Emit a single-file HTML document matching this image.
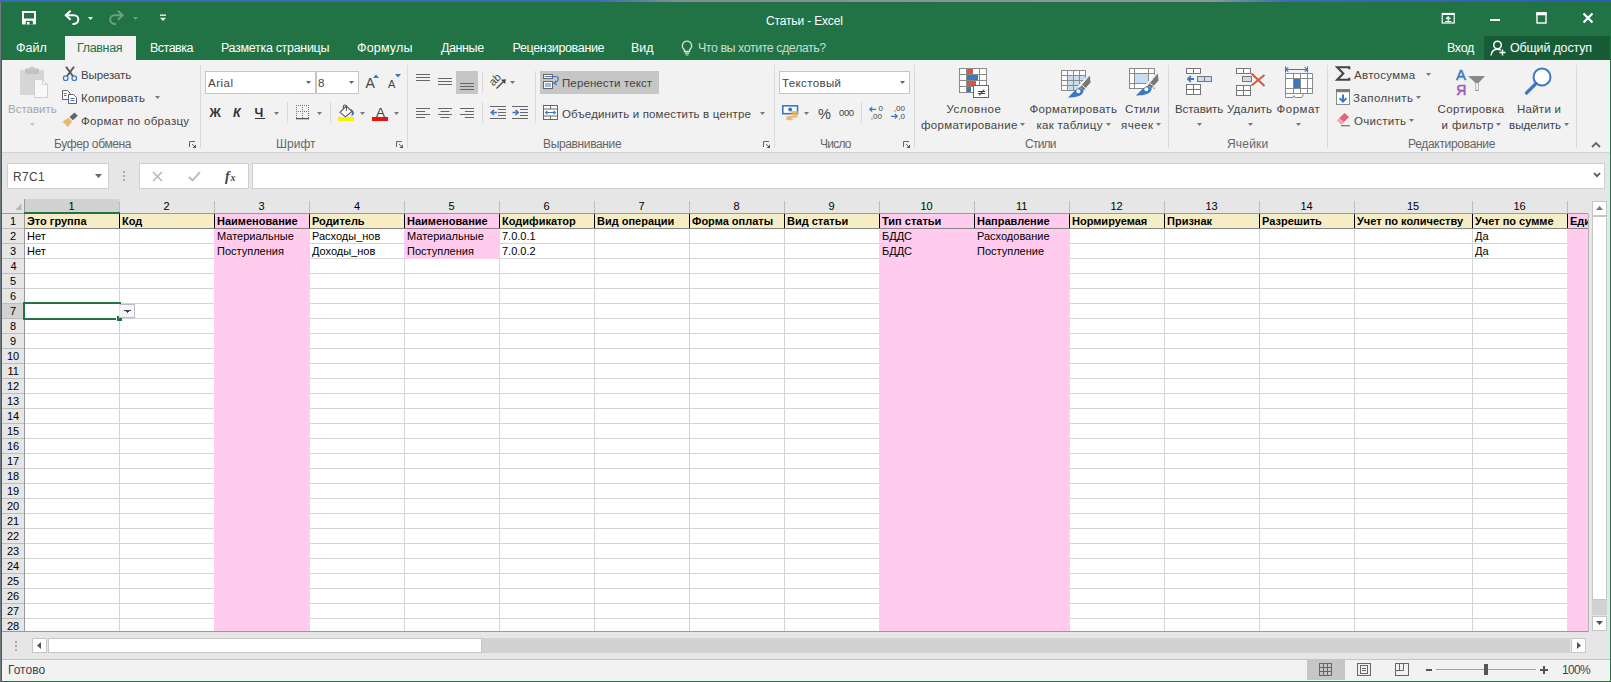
<!DOCTYPE html><html lang="ru"><head><meta charset="utf-8"><title>Статьи - Excel</title><style>html,body{margin:0;padding:0;}body{width:1611px;height:682px;overflow:hidden;position:relative;background:#217346;font-family:"Liberation Sans", "DejaVu Sans", sans-serif;}body>div,body>svg,body>span{position:absolute;}svg{display:block;overflow:visible;}.t{position:absolute;white-space:nowrap;}</style></head><body>
<div style="left:0px;top:0px;width:1611px;height:682px;background:#217346;"></div>
<div style="left:0px;top:0px;width:1611px;height:2px;background:linear-gradient(90deg,#3b6bb3 0,#3b6bb3 37%,#7d8f96 42%,#8a9a98 75%,#3b6bb3 80%,#2f5ea8 100%);"></div>
<div style="left:0px;top:2px;width:1px;height:680px;background:#6f7a80;"></div>
<div style="left:1px;top:2px;width:1609px;height:58px;background:#217346;"></div>
<div style="left:2px;top:60px;width:1608px;height:93px;background:#f2f2f2;"></div>
<div style="left:2px;top:153px;width:1608px;height:46px;background:#e6e6e6;"></div>
<div style="left:2px;top:152px;width:1608px;height:1px;background:#d4d4d4;"></div>
<div style="left:65px;top:36px;width:71px;height:24px;background:#f2f2f2;"></div>
<div style="left:1484px;top:36px;width:126px;height:24px;background:#185c37;"></div>
<svg style="left:22px;top:11px;" width="14" height="14" viewBox="0 0 14 14"><rect x="0" y="0" width="14" height="13.400" fill="#fff"/><rect x="2" y="2" width="10" height="5.500" fill="#217346"/><rect x="3.800" y="9.800" width="7" height="3.600" fill="#217346"/><rect x="5" y="11" width="2.500" height="2.400" fill="#fff"/></svg>
<svg style="left:64px;top:10px;" width="17" height="15" viewBox="0 0 17 15"><path d="M1.800,5.300 H10 A4.300,4.300 0 0 1 10,13.900 H8.500" fill="none" stroke="#fff" stroke-width="2"/><path d="M6.600,0.800 L1.800,5.300 L6.600,9.800" fill="none" stroke="#fff" stroke-width="2"/></svg>
<svg style="left:88px;top:17px;" width="5" height="3" viewBox="0 0 5 3"><polygon points="0,0 5,0 2.5,3" fill="#fff"/></svg>
<svg style="left:108px;top:10px;" width="17" height="15" viewBox="0 0 17 15"><g opacity="0.33"><path d="M14.700,5.300 H6.500 A4.300,4.300 0 0 0 6.500,13.900 H8" fill="none" stroke="#fff" stroke-width="2"/><path d="M9.900,0.800 L14.700,5.300 L9.900,9.800" fill="none" stroke="#fff" stroke-width="2"/></g></svg>
<svg style="left:133px;top:17px;" width="5" height="3" viewBox="0 0 5 3"><polygon points="0,0 5,0 2.5,3" fill="rgba(255,255,255,0.33)"/></svg>
<svg style="left:160px;top:14px;" width="6" height="8" viewBox="0 0 6 8"><rect x="0" y="0.5" width="6" height="1.300" fill="#fff"/><polygon points="0,3.800 6,3.800 3,7" fill="#fff"/></svg>
<svg style="left:1441px;top:12px;" width="14" height="12" viewBox="0 0 14 12"><rect x="1.200" y="1.500" width="12" height="9.500" fill="none" stroke="#fff" stroke-width="1.200"/><rect x="1" y="1" width="12.400" height="2" fill="#fff"/><path d="M7.200,9.500 V5 M5,7 L7.200,4.800 L9.400,7" fill="none" stroke="#fff" stroke-width="1.200"/><rect x="4.200" y="9" width="6" height="1" fill="#fff"/></svg>
<div style="left:1490px;top:19px;width:10px;height:2px;background:#fff;"></div>
<svg style="left:1536px;top:12px;" width="11" height="12" viewBox="0 0 11 12"><rect x="1" y="1" width="9" height="10" fill="none" stroke="#fff" stroke-width="1.4"/><rect x="0.3" y="0.3" width="10.4" height="3" fill="#fff"/></svg>
<svg style="left:1582px;top:12px;" width="12" height="12" viewBox="0 0 12 12"><path d="M1.5,1.5 L10.5,10.5 M10.5,1.5 L1.5,10.5" stroke="#fff" stroke-width="2.2"/></svg>
<svg style="left:680px;top:40px;" width="14" height="17" viewBox="0 0 14 17"><path d="M7,1.2 A4.6,4.6 0 0 1 9.6,9.6 V11.5 H4.4 V9.6 A4.6,4.6 0 0 1 7,1.2 Z" fill="none" stroke="#d4e4da" stroke-width="1.3"/><path d="M4.8,13.2 H9.2 M5.6,15 H8.4" stroke="#d4e4da" stroke-width="1.2"/></svg>
<svg style="left:1490px;top:40px;" width="17" height="17" viewBox="0 0 17 17"><circle cx="7.5" cy="5" r="3.8" fill="none" stroke="#fff" stroke-width="1.5"/><path d="M1,15.5 C1.5,11 4,9.2 7.5,9.2 C9,9.2 10,9.6 10.8,10.2" fill="none" stroke="#fff" stroke-width="1.5"/><path d="M12.5,9.5 V15.5 M9.5,12.5 H15.5" stroke="#fff" stroke-width="1.5"/></svg>
<div style="left:200px;top:65px;width:1px;height:83px;background:#dadada;"></div>
<div style="left:407px;top:65px;width:1px;height:83px;background:#dadada;"></div>
<div style="left:774px;top:65px;width:1px;height:83px;background:#dadada;"></div>
<div style="left:914px;top:65px;width:1px;height:83px;background:#dadada;"></div>
<div style="left:1168px;top:65px;width:1px;height:83px;background:#dadada;"></div>
<div style="left:1327px;top:65px;width:1px;height:83px;background:#dadada;"></div>
<div style="left:1576px;top:65px;width:1px;height:83px;background:#dadada;"></div>
<div style="left:287px;top:102px;width:1px;height:21px;background:#dadada;"></div>
<div style="left:330px;top:102px;width:1px;height:21px;background:#dadada;"></div>
<div style="left:482px;top:71px;width:1px;height:22px;background:#dadada;"></div>
<div style="left:482px;top:102px;width:1px;height:21px;background:#dadada;"></div>
<div style="left:535px;top:71px;width:1px;height:52px;background:#dadada;"></div>
<div style="left:861px;top:102px;width:1px;height:21px;background:#dadada;"></div>
<svg style="left:189px;top:141px;" width="8" height="8" viewBox="0 0 8 8"><path d="M0.5,6 V0.5 H6" fill="none" stroke="#666" stroke-width="1"/><path d="M3,3 L6,6" stroke="#666" stroke-width="1"/><polygon points="7,3.500 7,7 3.500,7" fill="#555"/></svg>
<svg style="left:396px;top:141px;" width="8" height="8" viewBox="0 0 8 8"><path d="M0.5,6 V0.5 H6" fill="none" stroke="#666" stroke-width="1"/><path d="M3,3 L6,6" stroke="#666" stroke-width="1"/><polygon points="7,3.500 7,7 3.500,7" fill="#555"/></svg>
<svg style="left:763px;top:141px;" width="8" height="8" viewBox="0 0 8 8"><path d="M0.5,6 V0.5 H6" fill="none" stroke="#666" stroke-width="1"/><path d="M3,3 L6,6" stroke="#666" stroke-width="1"/><polygon points="7,3.500 7,7 3.500,7" fill="#555"/></svg>
<svg style="left:903px;top:141px;" width="8" height="8" viewBox="0 0 8 8"><path d="M0.5,6 V0.5 H6" fill="none" stroke="#666" stroke-width="1"/><path d="M3,3 L6,6" stroke="#666" stroke-width="1"/><polygon points="7,3.500 7,7 3.500,7" fill="#555"/></svg>
<svg style="left:1591px;top:141px;" width="10" height="7" viewBox="0 0 10 7"><path d="M1,6 L5,2 L9,6" fill="none" stroke="#666" stroke-width="1.8"/></svg>
<svg style="left:20px;top:67px;" width="29" height="32" viewBox="0 0 29 32"><rect x="0" y="3" width="24" height="25" fill="#d6d6d6"/><rect x="5" y="1.500" width="14" height="5.500" rx="1" fill="#c2c2c2"/><circle cx="12" cy="2.500" r="2" fill="none" stroke="#c2c2c2" stroke-width="1.3"/><path d="M14.500,12.500 H22.500 L27.500,17.500 V30.500 H14.500 Z" fill="#f8f8f8" stroke="#cfcfcf" stroke-width="1"/><path d="M22.500,12.500 V17.500 H27.500" fill="none" stroke="#cfcfcf" stroke-width="1"/></svg>
<svg style="left:30px;top:123px;" width="5" height="3" viewBox="0 0 5 3"><polygon points="0,0 5,0 2.5,3" fill="#c0c0c0"/></svg>
<svg style="left:62px;top:66px;" width="16" height="16" viewBox="0 0 16 16"><path d="M4,0.8 L10.800,10 M12,0.8 L5.200,10" stroke="#555" stroke-width="1.900" fill="none"/><circle cx="3.700" cy="12.200" r="2.300" fill="none" stroke="#3b78c4" stroke-width="1.200"/><circle cx="12.300" cy="12.200" r="2.300" fill="none" stroke="#3b78c4" stroke-width="1.200"/></svg>
<svg style="left:61px;top:89px;" width="17" height="16" viewBox="0 0 17 16"><path d="M1.5,1.5 H6.5 L9,4 V10.5 H1.5 Z" fill="#fff" stroke="#666" stroke-width="1"/><path d="M7.5,5.5 H12.5 L15.5,8.5 V14.5 H7.5 Z" fill="#fff" stroke="#666" stroke-width="1"/><path d="M9.5,9.5 H13.5 M9.5,11.5 H13.5" stroke="#3b78c4" stroke-width="1"/><path d="M3,4.5 H5.5 M3,6.5 H5.5" stroke="#3b78c4" stroke-width="1"/></svg>
<svg style="left:155px;top:96px;" width="5" height="3" viewBox="0 0 5 3"><polygon points="0,0 5,0 2.5,3" fill="#777"/></svg>
<svg style="left:62px;top:112px;" width="17" height="16" viewBox="0 0 17 16"><path d="M7.500,5 L12.500,0.5 L15.800,3.800 L10.800,8.300 Z" fill="#666"/><path d="M0.5,9.500 L6.800,5.800 L10.200,9.200 L6,15 Z" fill="#e6b870"/><path d="M7,5.300 L10.700,9" stroke="#f2f2f2" stroke-width="0.900"/></svg>
<div style="left:205px;top:71px;width:111px;height:23px;background:#fff;border:1px solid #c6c6c6;box-sizing:border-box;"></div>
<div style="left:316px;top:71px;width:43px;height:23px;background:#fff;border:1px solid #c6c6c6;box-sizing:border-box;"></div>
<svg style="left:306px;top:81px;" width="5" height="3" viewBox="0 0 5 3"><polygon points="0,0 5,0 2.5,3" fill="#666"/></svg>
<svg style="left:349px;top:81px;" width="5" height="3" viewBox="0 0 5 3"><polygon points="0,0 5,0 2.5,3" fill="#666"/></svg>
<svg style="left:373px;top:74px;" width="6" height="4" viewBox="0 0 6 4"><polygon points="0,4 6,4 3,0.5" fill="#3b78c4"/></svg>
<svg style="left:395px;top:74px;" width="6" height="4" viewBox="0 0 6 4"><polygon points="0,0 6,0 3,3.5" fill="#3b78c4"/></svg>
<div style="left:255px;top:118px;width:10px;height:1px;background:#333;"></div>
<svg style="left:274px;top:112px;" width="5" height="3" viewBox="0 0 5 3"><polygon points="0,0 5,0 2.5,3" fill="#777"/></svg>
<svg style="left:296px;top:105px;" width="14" height="15" viewBox="0 0 14 15"><rect x="0" y="0" width="1" height="1" fill="#777"/><rect x="0" y="6" width="1" height="1" fill="#777"/><rect x="0" y="0" width="1" height="1" fill="#777"/><rect x="6" y="0" width="1" height="1" fill="#777"/><rect x="12" y="0" width="1" height="1" fill="#777"/><rect x="2" y="0" width="1" height="1" fill="#777"/><rect x="2" y="6" width="1" height="1" fill="#777"/><rect x="0" y="2" width="1" height="1" fill="#777"/><rect x="6" y="2" width="1" height="1" fill="#777"/><rect x="12" y="2" width="1" height="1" fill="#777"/><rect x="4" y="0" width="1" height="1" fill="#777"/><rect x="4" y="6" width="1" height="1" fill="#777"/><rect x="0" y="4" width="1" height="1" fill="#777"/><rect x="6" y="4" width="1" height="1" fill="#777"/><rect x="12" y="4" width="1" height="1" fill="#777"/><rect x="6" y="0" width="1" height="1" fill="#777"/><rect x="6" y="6" width="1" height="1" fill="#777"/><rect x="0" y="6" width="1" height="1" fill="#777"/><rect x="6" y="6" width="1" height="1" fill="#777"/><rect x="12" y="6" width="1" height="1" fill="#777"/><rect x="8" y="0" width="1" height="1" fill="#777"/><rect x="8" y="6" width="1" height="1" fill="#777"/><rect x="0" y="8" width="1" height="1" fill="#777"/><rect x="6" y="8" width="1" height="1" fill="#777"/><rect x="12" y="8" width="1" height="1" fill="#777"/><rect x="10" y="0" width="1" height="1" fill="#777"/><rect x="10" y="6" width="1" height="1" fill="#777"/><rect x="0" y="10" width="1" height="1" fill="#777"/><rect x="6" y="10" width="1" height="1" fill="#777"/><rect x="12" y="10" width="1" height="1" fill="#777"/><rect x="12" y="0" width="1" height="1" fill="#777"/><rect x="12" y="6" width="1" height="1" fill="#777"/><rect x="0" y="12" width="1" height="1" fill="#777"/><rect x="6" y="12" width="1" height="1" fill="#777"/><rect x="12" y="12" width="1" height="1" fill="#777"/><rect x="0" y="13" width="13" height="1.300" fill="#555"/></svg>
<svg style="left:317px;top:112px;" width="5" height="3" viewBox="0 0 5 3"><polygon points="0,0 5,0 2.5,3" fill="#777"/></svg>
<svg style="left:338px;top:104px;" width="17" height="17" viewBox="0 0 17 17"><rect x="0" y="13" width="16" height="4" fill="#f5f500"/><path d="M12,4.800 C15.200,6 16.600,8.500 15.900,10.300 C15.200,11.200 14.200,11.800 13.200,12.300 C13.800,10.200 14.100,8.600 14,7.600 Z" fill="#3b78c4"/><path d="M2,8.300 L8.300,2 L14,7.500 L7.400,12.900 Z" fill="#fff" stroke="#555" stroke-width="1.100"/><path d="M5.400,4.600 V2.500 A1.550,1.550 0 0 1 8.500,2.500 V6.800" fill="none" stroke="#555" stroke-width="1.100"/></svg>
<svg style="left:360px;top:112px;" width="5" height="3" viewBox="0 0 5 3"><polygon points="0,0 5,0 2.5,3" fill="#777"/></svg>
<div style="left:372px;top:117px;width:16px;height:4px;background:#f00f0f;"></div>
<svg style="left:394px;top:112px;" width="5" height="3" viewBox="0 0 5 3"><polygon points="0,0 5,0 2.5,3" fill="#777"/></svg>
<svg style="left:416px;top:74px;" width="14" height="8" viewBox="0 0 14 8"><rect x="0" y="0" width="14" height="1" fill="#666"/><rect x="0" y="3" width="14" height="1" fill="#666"/><rect x="0" y="6" width="14" height="1" fill="#666"/></svg>
<svg style="left:438px;top:78px;" width="14" height="8" viewBox="0 0 14 8"><rect x="0" y="0" width="14" height="1" fill="#666"/><rect x="0" y="3" width="14" height="1" fill="#666"/><rect x="0" y="6" width="14" height="1" fill="#666"/></svg>
<div style="left:456px;top:71px;width:22px;height:23px;background:#c6c6c6;"></div>
<svg style="left:460px;top:83px;" width="14" height="8" viewBox="0 0 14 8"><rect x="0" y="0" width="14" height="1" fill="#666"/><rect x="0" y="3" width="14" height="1" fill="#666"/><rect x="0" y="6" width="14" height="1" fill="#666"/></svg>
<svg style="left:416px;top:108px;" width="14" height="10" viewBox="0 0 14 10"><rect x="0" y="0" width="14" height="1" fill="#666"/><rect x="0" y="3" width="9" height="1" fill="#666"/><rect x="0" y="6" width="14" height="1" fill="#666"/><rect x="0" y="9" width="9" height="1" fill="#666"/></svg>
<svg style="left:438px;top:108px;" width="14" height="10" viewBox="0 0 14 10"><rect x="0.0" y="0" width="14" height="1" fill="#666"/><rect x="2.5" y="3" width="9" height="1" fill="#666"/><rect x="0.0" y="6" width="14" height="1" fill="#666"/><rect x="2.5" y="9" width="9" height="1" fill="#666"/></svg>
<svg style="left:460px;top:108px;" width="14" height="10" viewBox="0 0 14 10"><rect x="0" y="0" width="14" height="1" fill="#666"/><rect x="5" y="3" width="9" height="1" fill="#666"/><rect x="0" y="6" width="14" height="1" fill="#666"/><rect x="5" y="9" width="9" height="1" fill="#666"/></svg>
<svg style="left:489px;top:73px;" width="18" height="17" viewBox="0 0 18 17"><text transform="translate(4.200,13.500) rotate(-45)" font-family="Liberation Sans" font-size="11" fill="#444">ab</text><path d="M7.500,15.500 L15.500,7.500" stroke="#444" stroke-width="1.2"/><polygon points="12,6.800 16.800,6.200 16.200,11" fill="#444"/></svg>
<svg style="left:510px;top:81px;" width="5" height="3" viewBox="0 0 5 3"><polygon points="0,0 5,0 2.5,3" fill="#777"/></svg>
<svg style="left:490px;top:106px;" width="16" height="13" viewBox="0 0 16 13"><rect x="0" y="0" width="16" height="1" fill="#666"/><rect x="8" y="3" width="8" height="1" fill="#666"/><rect x="8" y="6" width="8" height="1" fill="#666"/><rect x="8" y="9" width="8" height="1" fill="#666"/><rect x="0" y="12" width="16" height="1" fill="#666"/><path d="M7,6.5 H1.5 M4,4 L1.3,6.5 L4,9" fill="none" stroke="#3b78c4" stroke-width="1.6"/></svg>
<svg style="left:512px;top:106px;" width="16" height="13" viewBox="0 0 16 13"><rect x="0" y="0" width="16" height="1" fill="#666"/><rect x="8" y="3" width="8" height="1" fill="#666"/><rect x="8" y="6" width="8" height="1" fill="#666"/><rect x="8" y="9" width="8" height="1" fill="#666"/><rect x="0" y="12" width="16" height="1" fill="#666"/><path d="M0.5,6.5 H6 M3.5,4 L6.2,6.5 L3.5,9" fill="none" stroke="#3b78c4" stroke-width="1.6"/></svg>
<div style="left:540px;top:71px;width:119px;height:23px;background:#c6c6c6;"></div>
<svg style="left:543px;top:74px;" width="16" height="15" viewBox="0 0 16 15"><rect x="0.5" y="0.5" width="9" height="4" fill="#fff" stroke="#666"/><rect x="0.5" y="7.500" width="9" height="7" fill="#fff" stroke="#666"/><path d="M2,2.500 H13.500 M2,10 H8 M2,12 H8" stroke="#3b78c4" stroke-width="1"/><path d="M13.500,2.500 C16.500,3.500 15.500,8 11.300,9 M13.300,6.800 L10.800,9.100 L13.800,10.800" fill="none" stroke="#3b78c4" stroke-width="1.100"/></svg>
<svg style="left:543px;top:105px;" width="16" height="15" viewBox="0 0 16 15"><rect x="0.5" y="0.5" width="14" height="14" fill="#fff" stroke="#666"/><path d="M0.5,4 H14.5 M0.5,11 H14.5 M7.5,0.5 V4 M7.5,11 V14.5" stroke="#666" stroke-width="1"/><path d="M2.5,7.5 H12.5 M4.5,5.8 L2.5,7.5 L4.5,9.2 M10.5,5.8 L12.5,7.5 L10.5,9.2" fill="none" stroke="#3b78c4" stroke-width="1.1"/></svg>
<svg style="left:760px;top:112px;" width="5" height="3" viewBox="0 0 5 3"><polygon points="0,0 5,0 2.5,3" fill="#777"/></svg>
<div style="left:779px;top:71px;width:131px;height:23px;background:#fff;border:1px solid #c6c6c6;box-sizing:border-box;"></div>
<svg style="left:900px;top:81px;" width="5" height="3" viewBox="0 0 5 3"><polygon points="0,0 5,0 2.5,3" fill="#666"/></svg>
<svg style="left:782px;top:105px;" width="17" height="16" viewBox="0 0 17 16"><rect x="0.8" y="0.8" width="14.700" height="7.900" fill="#fff" stroke="#3b78c4" stroke-width="1.600"/><circle cx="8.200" cy="4.500" r="2" fill="#3b78c4"/><ellipse cx="12.500" cy="7.200" rx="3.600" ry="1.100" fill="#e6b870"/><ellipse cx="12.500" cy="9.400" rx="3.600" ry="1.100" fill="#e6b870"/><ellipse cx="12.500" cy="11.600" rx="3.600" ry="1.100" fill="#e6b870"/><ellipse cx="7.500" cy="12" rx="3.400" ry="1.100" fill="#e6b870"/><ellipse cx="7.500" cy="14.200" rx="3.400" ry="1.100" fill="#e6b870"/></svg>
<svg style="left:804px;top:112px;" width="5" height="3" viewBox="0 0 5 3"><polygon points="0,0 5,0 2.5,3" fill="#777"/></svg>
<svg style="left:868px;top:105px;" width="16" height="15" viewBox="0 0 16 15"><text x="10.600" y="6.300" font-family="Liberation Sans" font-size="8" fill="#444">0</text><text x="2.800" y="14.200" font-family="Liberation Sans" font-size="8" fill="#444">,00</text><path d="M8,4.300 H1.800 M4.200,2 L1.800,4.300 L4.200,6.600" fill="none" stroke="#3b78c4" stroke-width="1.300"/></svg>
<svg style="left:890px;top:105px;" width="16" height="15" viewBox="0 0 16 15"><text x="3.800" y="6.300" font-family="Liberation Sans" font-size="8" fill="#444">,00</text><text x="8.300" y="14.200" font-family="Liberation Sans" font-size="8" fill="#444">,0</text><path d="M1,11.300 H7.200 M4.800,9 L7.200,11.300 L4.800,13.600" fill="none" stroke="#3b78c4" stroke-width="1.300"/></svg>
<svg style="left:959px;top:68px;" width="31" height="31" viewBox="0 0 31 31"><rect x="0.5" y="0.5" width="27" height="24" fill="#fff" stroke="#8a8a8a"/><path d="M0.5,6.5 H27.5 M0.5,12.5 H27.5 M0.5,18.5 H27.5 M7.5,0.5 V24.5 M20.5,0.5 V24.5" stroke="#8a8a8a" stroke-width="1"/><rect x="8" y="1" width="6" height="5" fill="#d8573c"/><rect x="8" y="7" width="11" height="5" fill="#3b78c4"/><rect x="8" y="13" width="9" height="5" fill="#d8573c"/><rect x="8" y="19" width="4" height="5" fill="#3b78c4"/><rect x="14.5" y="17.5" width="15" height="12" fill="#fff" stroke="#666"/><text x="18" y="28" font-family="DejaVu Sans" font-size="11" fill="#333">≠</text></svg>
<svg style="left:1020px;top:123px;" width="5" height="3" viewBox="0 0 5 3"><polygon points="0,0 5,0 2.5,3" fill="#777"/></svg>
<svg style="left:1061px;top:70px;" width="31" height="29" viewBox="0 0 31 29"><rect x="0.5" y="0.5" width="24" height="20" fill="#fff" stroke="#8a8a8a"/><rect x="7" y="6" width="17" height="14" fill="#c9dcf0"/><path d="M0.5,5.5 H24.5 M0.5,10.5 H24.5 M0.5,15.5 H24.5 M6.5,0.5 V20.5 M12.5,0.5 V20.5 M18.5,0.5 V20.5" stroke="#8a8a8a" stroke-width="1" fill="none"/><path d="M17,16 L28.800,3.500 L31.500,6 L30.500,13 L23.500,22 Z" fill="#f2f2f2"/><path d="M28.800,5.500 L29.500,12.500 L22.500,20.500 L18.800,17.500 Z" fill="#777"/><path d="M20.800,15.200 L24.800,18.300" stroke="#f2f2f2" stroke-width="1"/><path d="M18.500,17.800 C15.500,18.800 12,22.500 7,27.500 C13,27.500 18.500,26.800 21,24 C22.300,22.500 22.800,21.500 22.500,20.800 Z" fill="#3b78c4"/><circle cx="17.400" cy="21.300" r="2" fill="#fff"/></svg>
<svg style="left:1106px;top:123px;" width="5" height="3" viewBox="0 0 5 3"><polygon points="0,0 5,0 2.5,3" fill="#777"/></svg>
<svg style="left:1129px;top:68px;" width="31" height="29" viewBox="0 0 31 29"><rect x="0.5" y="0.5" width="25" height="20" fill="#fff" stroke="#8a8a8a"/><path d="M0.5,5.500 H25.500 M0.5,15.500 H25.500 M5.500,0.5 V20.500 M19.500,0.5 V20.500" stroke="#8a8a8a" stroke-width="1" fill="none"/><rect x="6" y="6" width="13" height="9" fill="#c9dcf0"/><path d="M17,16 L28.800,3.500 L31.500,6 L30.500,13 L23.500,22 Z" fill="#f2f2f2"/><path d="M28.800,5.500 L29.500,12.500 L22.500,20.500 L18.800,17.500 Z" fill="#777"/><path d="M20.800,15.200 L24.800,18.300" stroke="#f2f2f2" stroke-width="1"/><path d="M18.500,17.800 C15.500,18.800 12,22.500 7,27.500 C13,27.500 18.500,26.800 21,24 C22.300,22.500 22.800,21.500 22.500,20.800 Z" fill="#3b78c4"/><circle cx="17.400" cy="21.300" r="2" fill="#fff"/></svg>
<svg style="left:1156px;top:123px;" width="5" height="3" viewBox="0 0 5 3"><polygon points="0,0 5,0 2.5,3" fill="#777"/></svg>
<svg style="left:1186px;top:68px;" width="27" height="28" viewBox="0 0 27 28"><rect x="0.5" y="0.5" width="7" height="5" fill="#fff" stroke="#777" stroke-width="1"/><rect x="7.5" y="0.5" width="7" height="5" fill="#fff" stroke="#777" stroke-width="1"/><rect x="11.5" y="8.5" width="7" height="5" fill="#c9dcf0" stroke="#777" stroke-width="1"/><rect x="18.5" y="8.5" width="7" height="5" fill="#c9dcf0" stroke="#777" stroke-width="1"/><rect x="0.5" y="16.5" width="7" height="5" fill="#fff" stroke="#777" stroke-width="1"/><rect x="7.5" y="16.5" width="7" height="5" fill="#fff" stroke="#777" stroke-width="1"/><rect x="0.5" y="21.5" width="7" height="5" fill="#fff" stroke="#777" stroke-width="1"/><rect x="7.5" y="21.5" width="7" height="5" fill="#fff" stroke="#777" stroke-width="1"/><path d="M8,11 H2 M4.800,8.200 L2,11 L4.800,13.800" fill="none" stroke="#3b78c4" stroke-width="1.800"/></svg>
<svg style="left:1197px;top:123px;" width="5" height="3" viewBox="0 0 5 3"><polygon points="0,0 5,0 2.5,3" fill="#777"/></svg>
<svg style="left:1236px;top:68px;" width="30" height="29" viewBox="0 0 30 29"><rect x="0.5" y="0.5" width="7" height="5" fill="#fff" stroke="#777" stroke-width="1"/><rect x="7.5" y="0.5" width="7" height="5" fill="#fff" stroke="#777" stroke-width="1"/><rect x="6.5" y="8.5" width="9" height="5" fill="#c9dcf0" stroke="#777" stroke-width="1"/><rect x="0.5" y="17.5" width="7" height="5" fill="#fff" stroke="#777" stroke-width="1"/><rect x="7.5" y="17.5" width="7" height="5" fill="#fff" stroke="#777" stroke-width="1"/><rect x="0.5" y="22.5" width="7" height="5" fill="#fff" stroke="#777" stroke-width="1"/><rect x="7.5" y="22.5" width="7" height="5" fill="#fff" stroke="#777" stroke-width="1"/><path d="M15.500,5.500 L28.500,18 M28.500,7 L15.500,17.500" stroke="#d8573c" stroke-width="2" fill="none"/></svg>
<svg style="left:1248px;top:123px;" width="5" height="3" viewBox="0 0 5 3"><polygon points="0,0 5,0 2.5,3" fill="#777"/></svg>
<svg style="left:1285px;top:66px;" width="29" height="33" viewBox="0 0 29 33"><path d="M0.5,3.500 H22.500 M3.300,1.300 L0.8,3.500 L3.300,5.700 M19.700,1.300 L22.200,3.500 L19.700,5.700 M0.5,0.5 V6.500 M22.500,0.5 V6.500" fill="none" stroke="#3b78c4" stroke-width="1.100"/><path d="M0.5,7.500 H27.500 V27.500 H18.500 L17,31.500 H10 L9,29.500 L8,31.500 H0.5 Z" fill="#fff" stroke="#8a8a8a"/><path d="M8.500,7.500 V27.500 M15.500,7.500 V27.500 M22.500,7.500 V27.500 M0.5,12.500 H27.500 M0.5,22.500 H27.500 M0.5,27.500 H18.500" stroke="#8a8a8a" fill="none"/><rect x="9" y="13" width="6" height="9" fill="#3b78c4"/></svg>
<svg style="left:1296px;top:123px;" width="5" height="3" viewBox="0 0 5 3"><polygon points="0,0 5,0 2.5,3" fill="#777"/></svg>
<svg style="left:1335px;top:66px;" width="16" height="15" viewBox="0 0 16 15"><path d="M14.300,3.300 V1.200 H2.200 L8.300,7.500 L2.200,13.800 H14.300 V11.800" fill="none" stroke="#444" stroke-width="2.100"/></svg>
<svg style="left:1426px;top:73px;" width="5" height="3" viewBox="0 0 5 3"><polygon points="0,0 5,0 2.5,3" fill="#777"/></svg>
<svg style="left:1336px;top:89px;" width="15" height="16" viewBox="0 0 15 16"><rect x="0.5" y="0.5" width="13" height="15" fill="#fff" stroke="#8a8a8a"/><rect x="0" y="0" width="14" height="3.200" fill="#7a7a7a"/><path d="M7,5.500 V12.300 M3.600,9.200 L7,12.600 L10.400,9.200" fill="none" stroke="#3b78c4" stroke-width="2"/></svg>
<svg style="left:1416px;top:96px;" width="5" height="3" viewBox="0 0 5 3"><polygon points="0,0 5,0 2.5,3" fill="#777"/></svg>
<svg style="left:1336px;top:112px;" width="15" height="15" viewBox="0 0 15 15"><path d="M1,8.500 L8.500,1 L13,5 L5.500,12.500 Z" fill="#e8607a"/><path d="M1,8.500 L3.500,6 L8,10 L5.500,12.500 Z" fill="#f4a8b6"/><rect x="5" y="13.300" width="9" height="1" fill="#555"/></svg>
<svg style="left:1409px;top:119px;" width="5" height="3" viewBox="0 0 5 3"><polygon points="0,0 5,0 2.5,3" fill="#777"/></svg>
<svg style="left:1456px;top:68px;" width="31" height="28" viewBox="0 0 31 28"><text x="0" y="12.300" font-family="Liberation Sans" font-size="15" fill="#3b78c4" stroke="#3b78c4" stroke-width="0.5">А</text><text x="0.3" y="26.500" font-family="Liberation Sans" font-size="14" fill="#9b59b6" stroke="#9b59b6" stroke-width="0.5">Я</text><path d="M12,8 H29 L22.500,15 V23 H19.500 V15 Z" fill="#8a8a8a"/><rect x="20.200" y="15" width="1.600" height="7" fill="#fff"/></svg>
<svg style="left:1496px;top:123px;" width="5" height="3" viewBox="0 0 5 3"><polygon points="0,0 5,0 2.5,3" fill="#777"/></svg>
<svg style="left:1524px;top:67px;" width="29" height="29" viewBox="0 0 29 29"><circle cx="18" cy="10" r="8.500" fill="#fff" stroke="#3b78c4" stroke-width="2"/><path d="M12,16.500 L2.500,26" stroke="#3b78c4" stroke-width="3.200" stroke-linecap="round"/></svg>
<svg style="left:1564px;top:123px;" width="5" height="3" viewBox="0 0 5 3"><polygon points="0,0 5,0 2.5,3" fill="#777"/></svg>
<div style="left:7px;top:163px;width:102px;height:26px;background:#fff;border:1px solid #cfcfcf;box-sizing:border-box;"></div>
<svg style="left:95px;top:174px;" width="7" height="4" viewBox="0 0 7 4"><polygon points="0,0 7,0 3.5,4" fill="#666"/></svg>
<div style="left:123px;top:171px;width:2px;height:2px;background:#aaa;"></div>
<div style="left:123px;top:175px;width:2px;height:2px;background:#aaa;"></div>
<div style="left:123px;top:179px;width:2px;height:2px;background:#aaa;"></div>
<div style="left:139px;top:163px;width:110px;height:26px;background:#fff;border:1px solid #cfcfcf;box-sizing:border-box;"></div>
<svg style="left:152px;top:171px;" width="11" height="11" viewBox="0 0 11 11"><path d="M1,1 L10,10 M10,1 L1,10" stroke="#b8b8b8" stroke-width="1.600"/></svg>
<svg style="left:188px;top:171px;" width="13" height="11" viewBox="0 0 13 11"><path d="M1,6 L4.500,9.500 L12,1" fill="none" stroke="#b8b8b8" stroke-width="1.800"/></svg>
<div style="left:252px;top:163px;width:1353px;height:26px;background:#fff;border:1px solid #cfcfcf;box-sizing:border-box;"></div>
<svg style="left:1593px;top:172px;" width="8" height="6" viewBox="0 0 8 6"><path d="M1,1 L4,4.200 L7,1" fill="none" stroke="#555" stroke-width="1.800"/></svg>
<div style="left:2px;top:199px;width:1586px;height:15px;background:#e6e6e6;"></div>
<div style="left:2px;top:214px;width:22px;height:418px;background:#e6e6e6;"></div>
<div style="left:25px;top:214px;width:1563px;height:418px;background:#fff;"></div>
<div style="left:214px;top:214px;width:95px;height:418px;background:#ffccee;"></div>
<div style="left:879px;top:214px;width:95px;height:418px;background:#ffccee;"></div>
<div style="left:974px;top:214px;width:95px;height:418px;background:#ffccee;"></div>
<div style="left:1567px;top:214px;width:21px;height:418px;background:#ffccee;"></div>
<div style="left:404px;top:214px;width:95px;height:45px;background:#ffccee;"></div>
<div style="left:25px;top:214px;width:94px;height:14px;background:#f5edc6;"></div>
<div style="left:120px;top:214px;width:94px;height:14px;background:#f5edc6;"></div>
<div style="left:310px;top:214px;width:94px;height:14px;background:#f5edc6;"></div>
<div style="left:500px;top:214px;width:94px;height:14px;background:#f5edc6;"></div>
<div style="left:595px;top:214px;width:94px;height:14px;background:#f5edc6;"></div>
<div style="left:690px;top:214px;width:94px;height:14px;background:#f5edc6;"></div>
<div style="left:785px;top:214px;width:94px;height:14px;background:#f5edc6;"></div>
<div style="left:1070px;top:214px;width:94px;height:14px;background:#f5edc6;"></div>
<div style="left:1165px;top:214px;width:94px;height:14px;background:#f5edc6;"></div>
<div style="left:1260px;top:214px;width:94px;height:14px;background:#f5edc6;"></div>
<div style="left:1355px;top:214px;width:117px;height:14px;background:#f5edc6;"></div>
<div style="left:1473px;top:214px;width:94px;height:14px;background:#f5edc6;"></div>
<div style="left:25px;top:228px;width:1563px;height:1px;background:#d4d4d4;"></div>
<div style="left:25px;top:243px;width:1563px;height:1px;background:#d4d4d4;"></div>
<div style="left:25px;top:258px;width:1563px;height:1px;background:#d4d4d4;"></div>
<div style="left:25px;top:273px;width:1563px;height:1px;background:#d4d4d4;"></div>
<div style="left:25px;top:288px;width:1563px;height:1px;background:#d4d4d4;"></div>
<div style="left:25px;top:303px;width:1563px;height:1px;background:#d4d4d4;"></div>
<div style="left:25px;top:318px;width:1563px;height:1px;background:#d4d4d4;"></div>
<div style="left:25px;top:333px;width:1563px;height:1px;background:#d4d4d4;"></div>
<div style="left:25px;top:348px;width:1563px;height:1px;background:#d4d4d4;"></div>
<div style="left:25px;top:363px;width:1563px;height:1px;background:#d4d4d4;"></div>
<div style="left:25px;top:378px;width:1563px;height:1px;background:#d4d4d4;"></div>
<div style="left:25px;top:393px;width:1563px;height:1px;background:#d4d4d4;"></div>
<div style="left:25px;top:408px;width:1563px;height:1px;background:#d4d4d4;"></div>
<div style="left:25px;top:423px;width:1563px;height:1px;background:#d4d4d4;"></div>
<div style="left:25px;top:438px;width:1563px;height:1px;background:#d4d4d4;"></div>
<div style="left:25px;top:453px;width:1563px;height:1px;background:#d4d4d4;"></div>
<div style="left:25px;top:468px;width:1563px;height:1px;background:#d4d4d4;"></div>
<div style="left:25px;top:483px;width:1563px;height:1px;background:#d4d4d4;"></div>
<div style="left:25px;top:498px;width:1563px;height:1px;background:#d4d4d4;"></div>
<div style="left:25px;top:513px;width:1563px;height:1px;background:#d4d4d4;"></div>
<div style="left:25px;top:528px;width:1563px;height:1px;background:#d4d4d4;"></div>
<div style="left:25px;top:543px;width:1563px;height:1px;background:#d4d4d4;"></div>
<div style="left:25px;top:558px;width:1563px;height:1px;background:#d4d4d4;"></div>
<div style="left:25px;top:573px;width:1563px;height:1px;background:#d4d4d4;"></div>
<div style="left:25px;top:588px;width:1563px;height:1px;background:#d4d4d4;"></div>
<div style="left:25px;top:603px;width:1563px;height:1px;background:#d4d4d4;"></div>
<div style="left:25px;top:618px;width:1563px;height:1px;background:#d4d4d4;"></div>
<div style="left:119px;top:229px;width:1px;height:403px;background:#d4d4d4;"></div>
<div style="left:214px;top:229px;width:1px;height:403px;background:#d4d4d4;"></div>
<div style="left:309px;top:229px;width:1px;height:403px;background:#d4d4d4;"></div>
<div style="left:404px;top:229px;width:1px;height:403px;background:#d4d4d4;"></div>
<div style="left:499px;top:229px;width:1px;height:403px;background:#d4d4d4;"></div>
<div style="left:594px;top:229px;width:1px;height:403px;background:#d4d4d4;"></div>
<div style="left:689px;top:229px;width:1px;height:403px;background:#d4d4d4;"></div>
<div style="left:784px;top:229px;width:1px;height:403px;background:#d4d4d4;"></div>
<div style="left:879px;top:229px;width:1px;height:403px;background:#d4d4d4;"></div>
<div style="left:974px;top:229px;width:1px;height:403px;background:#d4d4d4;"></div>
<div style="left:1069px;top:229px;width:1px;height:403px;background:#d4d4d4;"></div>
<div style="left:1164px;top:229px;width:1px;height:403px;background:#d4d4d4;"></div>
<div style="left:1259px;top:229px;width:1px;height:403px;background:#d4d4d4;"></div>
<div style="left:1354px;top:229px;width:1px;height:403px;background:#d4d4d4;"></div>
<div style="left:1472px;top:229px;width:1px;height:403px;background:#d4d4d4;"></div>
<div style="left:1567px;top:229px;width:1px;height:403px;background:#d4d4d4;"></div>
<div style="left:214px;top:229px;width:96px;height:403px;background:#ffccee;"></div>
<div style="left:879px;top:229px;width:96px;height:403px;background:#ffccee;"></div>
<div style="left:974px;top:229px;width:96px;height:403px;background:#ffccee;"></div>
<div style="left:1567px;top:229px;width:21px;height:403px;background:#ffccee;"></div>
<div style="left:404px;top:229px;width:96px;height:30px;background:#ffccee;"></div>
<div style="left:119px;top:214px;width:1px;height:14px;background:#000;"></div>
<div style="left:214px;top:214px;width:1px;height:14px;background:#000;"></div>
<div style="left:309px;top:214px;width:1px;height:14px;background:#000;"></div>
<div style="left:404px;top:214px;width:1px;height:14px;background:#000;"></div>
<div style="left:499px;top:214px;width:1px;height:14px;background:#000;"></div>
<div style="left:594px;top:214px;width:1px;height:14px;background:#000;"></div>
<div style="left:689px;top:214px;width:1px;height:14px;background:#000;"></div>
<div style="left:784px;top:214px;width:1px;height:14px;background:#000;"></div>
<div style="left:879px;top:214px;width:1px;height:14px;background:#000;"></div>
<div style="left:974px;top:214px;width:1px;height:14px;background:#000;"></div>
<div style="left:1069px;top:214px;width:1px;height:14px;background:#000;"></div>
<div style="left:1164px;top:214px;width:1px;height:14px;background:#000;"></div>
<div style="left:1259px;top:214px;width:1px;height:14px;background:#000;"></div>
<div style="left:1354px;top:214px;width:1px;height:14px;background:#000;"></div>
<div style="left:1472px;top:214px;width:1px;height:14px;background:#000;"></div>
<div style="left:1567px;top:214px;width:1px;height:14px;background:#000;"></div>
<div style="left:25px;top:228px;width:1563px;height:1px;background:#858585;"></div>
<div style="left:2px;top:213px;width:1586px;height:1px;background:#9a9a9a;"></div>
<div style="left:24px;top:199px;width:1px;height:433px;background:#9a9a9a;"></div>
<div style="left:119px;top:201px;width:1px;height:12px;background:#bdbdbd;"></div>
<div style="left:214px;top:201px;width:1px;height:12px;background:#bdbdbd;"></div>
<div style="left:309px;top:201px;width:1px;height:12px;background:#bdbdbd;"></div>
<div style="left:404px;top:201px;width:1px;height:12px;background:#bdbdbd;"></div>
<div style="left:499px;top:201px;width:1px;height:12px;background:#bdbdbd;"></div>
<div style="left:594px;top:201px;width:1px;height:12px;background:#bdbdbd;"></div>
<div style="left:689px;top:201px;width:1px;height:12px;background:#bdbdbd;"></div>
<div style="left:784px;top:201px;width:1px;height:12px;background:#bdbdbd;"></div>
<div style="left:879px;top:201px;width:1px;height:12px;background:#bdbdbd;"></div>
<div style="left:974px;top:201px;width:1px;height:12px;background:#bdbdbd;"></div>
<div style="left:1069px;top:201px;width:1px;height:12px;background:#bdbdbd;"></div>
<div style="left:1164px;top:201px;width:1px;height:12px;background:#bdbdbd;"></div>
<div style="left:1259px;top:201px;width:1px;height:12px;background:#bdbdbd;"></div>
<div style="left:1354px;top:201px;width:1px;height:12px;background:#bdbdbd;"></div>
<div style="left:1472px;top:201px;width:1px;height:12px;background:#bdbdbd;"></div>
<div style="left:1567px;top:201px;width:1px;height:12px;background:#bdbdbd;"></div>
<div style="left:2px;top:228px;width:22px;height:1px;background:#bdbdbd;"></div>
<div style="left:2px;top:243px;width:22px;height:1px;background:#bdbdbd;"></div>
<div style="left:2px;top:258px;width:22px;height:1px;background:#bdbdbd;"></div>
<div style="left:2px;top:273px;width:22px;height:1px;background:#bdbdbd;"></div>
<div style="left:2px;top:288px;width:22px;height:1px;background:#bdbdbd;"></div>
<div style="left:2px;top:303px;width:22px;height:1px;background:#bdbdbd;"></div>
<div style="left:2px;top:318px;width:22px;height:1px;background:#bdbdbd;"></div>
<div style="left:2px;top:333px;width:22px;height:1px;background:#bdbdbd;"></div>
<div style="left:2px;top:348px;width:22px;height:1px;background:#bdbdbd;"></div>
<div style="left:2px;top:363px;width:22px;height:1px;background:#bdbdbd;"></div>
<div style="left:2px;top:378px;width:22px;height:1px;background:#bdbdbd;"></div>
<div style="left:2px;top:393px;width:22px;height:1px;background:#bdbdbd;"></div>
<div style="left:2px;top:408px;width:22px;height:1px;background:#bdbdbd;"></div>
<div style="left:2px;top:423px;width:22px;height:1px;background:#bdbdbd;"></div>
<div style="left:2px;top:438px;width:22px;height:1px;background:#bdbdbd;"></div>
<div style="left:2px;top:453px;width:22px;height:1px;background:#bdbdbd;"></div>
<div style="left:2px;top:468px;width:22px;height:1px;background:#bdbdbd;"></div>
<div style="left:2px;top:483px;width:22px;height:1px;background:#bdbdbd;"></div>
<div style="left:2px;top:498px;width:22px;height:1px;background:#bdbdbd;"></div>
<div style="left:2px;top:513px;width:22px;height:1px;background:#bdbdbd;"></div>
<div style="left:2px;top:528px;width:22px;height:1px;background:#bdbdbd;"></div>
<div style="left:2px;top:543px;width:22px;height:1px;background:#bdbdbd;"></div>
<div style="left:2px;top:558px;width:22px;height:1px;background:#bdbdbd;"></div>
<div style="left:2px;top:573px;width:22px;height:1px;background:#bdbdbd;"></div>
<div style="left:2px;top:588px;width:22px;height:1px;background:#bdbdbd;"></div>
<div style="left:2px;top:603px;width:22px;height:1px;background:#bdbdbd;"></div>
<div style="left:2px;top:618px;width:22px;height:1px;background:#bdbdbd;"></div>
<div style="left:25px;top:199px;width:94px;height:14px;background:#d2d2d2;"></div>
<div style="left:24px;top:212px;width:96px;height:2px;background:#217346;"></div>
<div style="left:2px;top:304px;width:22px;height:14px;background:#d2d2d2;"></div>
<div style="left:23px;top:303px;width:2px;height:16px;background:#217346;"></div>
<svg style="left:14px;top:203px;" width="8" height="8" viewBox="0 0 8 8"><polygon points="7.500,0.5 7.500,7 1,7" fill="#b8b8b8"/></svg>
<div style="left:2px;top:631px;width:1587px;height:1px;background:#9a9a9a;"></div>
<div style="left:1588px;top:214px;width:1px;height:418px;background:#b4b4b4;"></div>
<div style="left:2px;top:632px;width:1608px;height:27px;background:#e6e6e6;"></div>
<div style="left:1589px;top:199px;width:21px;height:433px;background:#e6e6e6;"></div>
<div style="left:1588px;top:199px;width:1px;height:15px;background:#e6e6e6;"></div>
<div style="left:1568px;top:214px;width:20px;height:14px;overflow:hidden;"><span style="position:absolute;left:2px;top:0;font-weight:bold;font-size:11px;line-height:14px;color:#000;white-space:nowrap;">Единица</span></div>
<div style="left:23px;top:302px;width:98px;height:18px;border:2px solid #217346;box-sizing:border-box;"></div>
<div style="left:116px;top:315px;width:6px;height:6px;background:#217346;border-left:1px solid #fff;border-top:1px solid #fff;box-sizing:border-box;"></div>
<div style="left:119px;top:304px;width:16px;height:14px;background:#f6f6f8;border:1px solid #b8bccc;border-left-color:#e4e6ee;box-sizing:border-box;"></div>
<svg style="left:124px;top:310px;" width="7" height="3" viewBox="0 0 7 3"><rect x="0" y="0" width="7" height="1" fill="#444"/><rect x="2" y="1" width="3" height="1" fill="#444"/><rect x="3" y="2" width="1" height="1" fill="#666"/></svg>
<div style="left:1592px;top:201px;width:15px;height:15px;background:#fff;border:1px solid #c6c6c6;box-sizing:border-box;"></div>
<svg style="left:1596px;top:206px;" width="7" height="4" viewBox="0 0 7 4"><polygon points="0,4 7,4 3.500,0" fill="#777"/></svg>
<div style="left:1592px;top:216px;width:15px;height:384px;background:#fff;border:1px solid #c6c6c6;box-sizing:border-box;"></div>
<div style="left:1592px;top:600px;width:15px;height:15px;background:#d2d2d2;"></div>
<div style="left:1592px;top:616px;width:15px;height:15px;background:#fff;border:1px solid #c6c6c6;box-sizing:border-box;"></div>
<svg style="left:1596px;top:621px;" width="7" height="4" viewBox="0 0 7 4"><polygon points="0,0 7,0 3.500,4" fill="#555"/></svg>
<div style="left:15px;top:641px;width:2px;height:2px;background:#aaa;"></div>
<div style="left:15px;top:645px;width:2px;height:2px;background:#aaa;"></div>
<div style="left:15px;top:649px;width:2px;height:2px;background:#aaa;"></div>
<div style="left:32px;top:638px;width:15px;height:15px;background:#fff;border:1px solid #c6c6c6;box-sizing:border-box;"></div>
<svg style="left:37px;top:642px;" width="4" height="7" viewBox="0 0 4 7"><polygon points="4,0 4,7 0,3.500" fill="#555"/></svg>
<div style="left:48px;top:638px;width:1522px;height:15px;background:#d2d2d2;"></div>
<div style="left:48px;top:638px;width:434px;height:15px;background:#fff;border:1px solid #c6c6c6;box-sizing:border-box;"></div>
<div style="left:1571px;top:638px;width:15px;height:15px;background:#fff;border:1px solid #c6c6c6;box-sizing:border-box;"></div>
<svg style="left:1577px;top:642px;" width="4" height="7" viewBox="0 0 4 7"><polygon points="0,0 0,7 4,3.500" fill="#555"/></svg>
<div style="left:2px;top:659px;width:1608px;height:22px;background:#f2f2f2;"></div>
<div style="left:2px;top:659px;width:1608px;height:1px;background:#c4c4c4;"></div>
<div style="left:1307px;top:660px;width:38px;height:20px;background:#c6c6c6;"></div>
<svg style="left:1319px;top:663px;" width="13" height="13" viewBox="0 0 13 13"><rect x="0.5" y="0.5" width="12" height="12" fill="none" stroke="#666"/><path d="M4.500,0.5 V12.5 M8.500,0.5 V12.5 M0.5,4.500 H12.5 M0.5,8.500 H12.5" stroke="#666"/></svg>
<svg style="left:1357px;top:663px;" width="14" height="13" viewBox="0 0 14 13"><rect x="0.5" y="0.5" width="13" height="12" fill="none" stroke="#666"/><rect x="3.500" y="2.500" width="7" height="8" fill="none" stroke="#666"/><path d="M5,5.500 H9 M5,7.500 H9" stroke="#666"/></svg>
<svg style="left:1395px;top:663px;" width="14" height="13" viewBox="0 0 14 13"><rect x="0.5" y="0.5" width="13" height="12" fill="none" stroke="#666"/><path d="M4.500,0.5 V7.500 M8.500,0.5 V7.500 M0.5,7.500 H8.500" stroke="#666" fill="none"/></svg>
<div style="left:1426px;top:669px;width:6px;height:2px;background:#555;"></div>
<div style="left:1436px;top:669px;width:100px;height:1px;background:#a0a0a0;"></div>
<div style="left:1484px;top:664px;width:4px;height:11px;background:#555;"></div>
<div style="left:1540px;top:669px;width:8px;height:2px;background:#555;"></div>
<div style="left:1543px;top:666px;width:2px;height:8px;background:#555;"></div>
<span class="t" id="L0" style="left:766.00px;top:14.00px;font-size:12px;line-height:14px;color:#fff;letter-spacing:-0.154px;">Статьи - Excel</span>
<span class="t" id="L1" style="left:16.00px;top:41.00px;font-size:12.5px;line-height:14px;color:#fff;">Файл</span>
<span class="t" id="L2" style="left:77.00px;top:41.00px;font-size:12.5px;line-height:14px;color:#217346;letter-spacing:-0.333px;">Главная</span>
<span class="t" id="L3" style="left:150.00px;top:41.00px;font-size:12.5px;line-height:14px;color:#fff;letter-spacing:-0.500px;">Вставка</span>
<span class="t" id="L4" style="left:221.00px;top:41.00px;font-size:12.5px;line-height:14px;color:#fff;letter-spacing:-0.312px;">Разметка страницы</span>
<span class="t" id="L5" style="left:357.00px;top:41.00px;font-size:12.5px;line-height:14px;color:#fff;letter-spacing:0.167px;">Формулы</span>
<span class="t" id="L6" style="left:441.00px;top:41.00px;font-size:12.5px;line-height:14px;color:#fff;letter-spacing:-0.400px;">Данные</span>
<span class="t" id="L7" style="left:512.50px;top:41.00px;font-size:12.5px;line-height:14px;color:#fff;letter-spacing:-0.346px;">Рецензирование</span>
<span class="t" id="L8" style="left:631.00px;top:41.00px;font-size:12.5px;line-height:14px;color:#fff;">Вид</span>
<span class="t" id="L9" style="left:698.00px;top:41.00px;font-size:12.5px;line-height:14px;color:#c8dcd0;letter-spacing:-0.476px;">Что вы хотите сделать?</span>
<span class="t" id="L10" style="left:1447.00px;top:41.00px;font-size:12.5px;line-height:14px;color:#fff;letter-spacing:-0.333px;">Вход</span>
<span class="t" id="L11" style="left:1510.00px;top:41.00px;font-size:12.5px;line-height:14px;color:#fff;letter-spacing:-0.182px;">Общий доступ</span>
<span class="t" id="L12" style="left:54.00px;top:137.00px;font-size:12px;line-height:14px;color:#666;letter-spacing:-0.364px;">Буфер обмена</span>
<span class="t" id="L13" style="left:276.00px;top:137.00px;font-size:12px;line-height:14px;color:#666;">Шрифт</span>
<span class="t" id="L14" style="left:543.00px;top:137.00px;font-size:12px;line-height:14px;color:#666;letter-spacing:-0.364px;">Выравнивание</span>
<span class="t" id="L15" style="left:820.00px;top:137.00px;font-size:12px;line-height:14px;color:#666;letter-spacing:-0.750px;">Число</span>
<span class="t" id="L16" style="left:1025.00px;top:137.00px;font-size:12px;line-height:14px;color:#666;letter-spacing:-0.750px;">Стили</span>
<span class="t" id="L17" style="left:1227.00px;top:137.00px;font-size:12px;line-height:14px;color:#666;letter-spacing:0.200px;">Ячейки</span>
<span class="t" id="L18" style="left:1408.00px;top:137.00px;font-size:12px;line-height:14px;color:#666;letter-spacing:-0.308px;">Редактирование</span>
<span class="t" id="L19" style="left:8.00px;top:103.00px;font-size:11.5px;line-height:12px;color:#a6a6a6;">Вставить</span>
<span class="t" id="L20" style="left:81.00px;top:69.00px;font-size:11.5px;line-height:12px;color:#444;letter-spacing:-0.143px;">Вырезать</span>
<span class="t" id="L21" style="left:81.00px;top:92.00px;font-size:11.5px;line-height:12px;color:#444;letter-spacing:0.222px;">Копировать</span>
<span class="t" id="L22" style="left:81.00px;top:115.00px;font-size:11.5px;line-height:12px;color:#444;letter-spacing:0.312px;">Формат по образцу</span>
<span class="t" id="L23" style="left:208.00px;top:77.00px;font-size:11.5px;line-height:12px;color:#444;letter-spacing:0.500px;">Arial</span>
<span class="t" id="L24" style="left:318.00px;top:77.00px;font-size:11.5px;line-height:12px;color:#444;">8</span>
<span class="t" id="L25" style="left:365.50px;top:74.50px;font-size:14px;line-height:16px;color:#444;">A</span>
<span class="t" id="L26" style="left:388.00px;top:77.50px;font-size:11px;line-height:12px;color:#444;">A</span>
<span class="t" id="L27" style="left:209.50px;top:106.00px;font-size:12.5px;line-height:14px;color:#333;font-weight:bold;">Ж</span>
<span class="t" id="L28" style="left:233.00px;top:106.00px;font-size:12.5px;line-height:14px;color:#333;font-weight:bold;font-style:italic;">К</span>
<span class="t" id="L29" style="left:254.50px;top:106.00px;font-size:12.5px;line-height:14px;color:#333;font-weight:bold;">Ч</span>
<span class="t" id="L30" style="left:376.00px;top:104.50px;font-size:13.5px;line-height:15px;color:#444;">A</span>
<span class="t" id="L31" style="left:562.00px;top:77.00px;font-size:11.5px;line-height:12px;color:#444;letter-spacing:0.107px;">Перенести текст</span>
<span class="t" id="L32" style="left:562.00px;top:108.00px;font-size:11.5px;line-height:12px;color:#444;letter-spacing:0.167px;">Объединить и поместить в центре</span>
<span class="t" id="L33" style="left:782.00px;top:77.00px;font-size:11.5px;line-height:12px;color:#444;letter-spacing:0.375px;">Текстовый</span>
<span class="t" id="L34" style="left:818.00px;top:105.50px;font-size:14.5px;line-height:16px;color:#444;">%</span>
<span class="t" id="L35" style="left:839.00px;top:107.00px;font-size:9.5px;line-height:11px;color:#444;letter-spacing:-0.350px;">000</span>
<span class="t" id="L36" style="left:946.50px;top:103.00px;font-size:11.5px;line-height:12px;color:#444;letter-spacing:0.500px;">Условное</span>
<span class="t" id="L37" style="left:921.00px;top:119.00px;font-size:11.5px;line-height:12px;color:#444;letter-spacing:0.308px;">форматирование</span>
<span class="t" id="L38" style="left:1029.50px;top:103.00px;font-size:11.5px;line-height:12px;color:#444;letter-spacing:0.333px;">Форматировать</span>
<span class="t" id="L39" style="left:1036.50px;top:119.00px;font-size:11.5px;line-height:12px;color:#444;letter-spacing:0.300px;">как таблицу</span>
<span class="t" id="L40" style="left:1125.00px;top:103.00px;font-size:11.5px;line-height:12px;color:#444;letter-spacing:0.375px;">Стили</span>
<span class="t" id="L41" style="left:1121.00px;top:119.00px;font-size:11.5px;line-height:12px;color:#444;letter-spacing:0.500px;">ячеек</span>
<span class="t" id="L42" style="left:1175.00px;top:103.00px;font-size:11.5px;line-height:12px;color:#444;letter-spacing:-0.071px;">Вставить</span>
<span class="t" id="L43" style="left:1227.00px;top:103.00px;font-size:11.5px;line-height:12px;color:#444;letter-spacing:0.167px;">Удалить</span>
<span class="t" id="L44" style="left:1276.50px;top:103.00px;font-size:11.5px;line-height:12px;color:#444;letter-spacing:0.500px;">Формат</span>
<span class="t" id="L45" style="left:1354.00px;top:69.00px;font-size:11.5px;line-height:12px;color:#444;letter-spacing:0.312px;">Автосумма</span>
<span class="t" id="L46" style="left:1353.00px;top:92.00px;font-size:11.5px;line-height:12px;color:#444;letter-spacing:0.438px;">Заполнить</span>
<span class="t" id="L47" style="left:1354.00px;top:115.00px;font-size:11.5px;line-height:12px;color:#444;letter-spacing:0.286px;">Очистить</span>
<span class="t" id="L48" style="left:1437.50px;top:103.00px;font-size:11.5px;line-height:12px;color:#444;letter-spacing:0.389px;">Сортировка</span>
<span class="t" id="L49" style="left:1441.50px;top:119.00px;font-size:11.5px;line-height:12px;color:#444;letter-spacing:0.429px;">и фильтр</span>
<span class="t" id="L50" style="left:1517.00px;top:103.00px;font-size:11.5px;line-height:12px;color:#444;letter-spacing:0.250px;">Найти и</span>
<span class="t" id="L51" style="left:1509.00px;top:119.00px;font-size:11.5px;line-height:12px;color:#444;letter-spacing:0.071px;">выделить</span>
<span class="t" id="L52" style="left:13.00px;top:170.00px;font-size:12px;line-height:14px;color:#444;letter-spacing:0.333px;">R7C1</span>
<span class="t" id="L53" style="left:225.00px;top:169.00px;font-size:14px;line-height:15px;color:#444;font-family:'Liberation Serif',serif;font-style:italic;font-weight:bold;">f</span>
<span class="t" id="L54" style="left:230.50px;top:172.00px;font-size:10px;line-height:11px;color:#444;font-family:'Liberation Serif',serif;font-style:italic;font-weight:bold;">x</span>
<span class="t" id="L55" style="left:68.50px;top:200.00px;font-size:11px;line-height:12px;color:#000;">1</span>
<span class="t" id="L56" style="left:163.50px;top:200.00px;font-size:11px;line-height:12px;color:#000;">2</span>
<span class="t" id="L57" style="left:258.50px;top:200.00px;font-size:11px;line-height:12px;color:#000;">3</span>
<span class="t" id="L58" style="left:354.00px;top:200.00px;font-size:11px;line-height:12px;color:#000;">4</span>
<span class="t" id="L59" style="left:448.50px;top:200.00px;font-size:11px;line-height:12px;color:#000;">5</span>
<span class="t" id="L60" style="left:543.50px;top:200.00px;font-size:11px;line-height:12px;color:#000;">6</span>
<span class="t" id="L61" style="left:638.50px;top:200.00px;font-size:11px;line-height:12px;color:#000;">7</span>
<span class="t" id="L62" style="left:733.50px;top:200.00px;font-size:11px;line-height:12px;color:#000;">8</span>
<span class="t" id="L63" style="left:828.50px;top:200.00px;font-size:11px;line-height:12px;color:#000;">9</span>
<span class="t" id="L64" style="left:920.50px;top:200.00px;font-size:11px;line-height:12px;color:#000;">10</span>
<span class="t" id="L65" style="left:1016.00px;top:200.00px;font-size:11px;line-height:12px;color:#000;">11</span>
<span class="t" id="L66" style="left:1110.50px;top:200.00px;font-size:11px;line-height:12px;color:#000;">12</span>
<span class="t" id="L67" style="left:1205.50px;top:200.00px;font-size:11px;line-height:12px;color:#000;">13</span>
<span class="t" id="L68" style="left:1300.50px;top:200.00px;font-size:11px;line-height:12px;color:#000;">14</span>
<span class="t" id="L69" style="left:1407.00px;top:200.00px;font-size:11px;line-height:12px;color:#000;">15</span>
<span class="t" id="L70" style="left:1513.50px;top:200.00px;font-size:11px;line-height:12px;color:#000;">16</span>
<span class="t" id="L71" style="left:10.00px;top:215.00px;font-size:11px;line-height:12px;color:#000;">1</span>
<span class="t" id="L72" style="left:10.00px;top:230.00px;font-size:11px;line-height:12px;color:#000;">2</span>
<span class="t" id="L73" style="left:10.00px;top:245.00px;font-size:11px;line-height:12px;color:#000;">3</span>
<span class="t" id="L74" style="left:10.50px;top:260.00px;font-size:11px;line-height:12px;color:#000;">4</span>
<span class="t" id="L75" style="left:10.00px;top:275.00px;font-size:11px;line-height:12px;color:#000;">5</span>
<span class="t" id="L76" style="left:10.00px;top:290.00px;font-size:11px;line-height:12px;color:#000;">6</span>
<span class="t" id="L77" style="left:10.00px;top:305.00px;font-size:11px;line-height:12px;color:#000;">7</span>
<span class="t" id="L78" style="left:10.00px;top:320.00px;font-size:11px;line-height:12px;color:#000;">8</span>
<span class="t" id="L79" style="left:10.00px;top:335.00px;font-size:11px;line-height:12px;color:#000;">9</span>
<span class="t" id="L80" style="left:7.00px;top:350.00px;font-size:11px;line-height:12px;color:#000;">10</span>
<span class="t" id="L81" style="left:7.50px;top:365.00px;font-size:11px;line-height:12px;color:#000;">11</span>
<span class="t" id="L82" style="left:7.00px;top:380.00px;font-size:11px;line-height:12px;color:#000;">12</span>
<span class="t" id="L83" style="left:7.00px;top:395.00px;font-size:11px;line-height:12px;color:#000;">13</span>
<span class="t" id="L84" style="left:7.00px;top:410.00px;font-size:11px;line-height:12px;color:#000;">14</span>
<span class="t" id="L85" style="left:7.00px;top:425.00px;font-size:11px;line-height:12px;color:#000;">15</span>
<span class="t" id="L86" style="left:7.00px;top:440.00px;font-size:11px;line-height:12px;color:#000;">16</span>
<span class="t" id="L87" style="left:7.00px;top:455.00px;font-size:11px;line-height:12px;color:#000;">17</span>
<span class="t" id="L88" style="left:7.00px;top:470.00px;font-size:11px;line-height:12px;color:#000;">18</span>
<span class="t" id="L89" style="left:7.00px;top:485.00px;font-size:11px;line-height:12px;color:#000;">19</span>
<span class="t" id="L90" style="left:7.00px;top:500.00px;font-size:11px;line-height:12px;color:#000;">20</span>
<span class="t" id="L91" style="left:7.00px;top:515.00px;font-size:11px;line-height:12px;color:#000;">21</span>
<span class="t" id="L92" style="left:7.00px;top:530.00px;font-size:11px;line-height:12px;color:#000;">22</span>
<span class="t" id="L93" style="left:7.00px;top:545.00px;font-size:11px;line-height:12px;color:#000;">23</span>
<span class="t" id="L94" style="left:7.00px;top:560.00px;font-size:11px;line-height:12px;color:#000;">24</span>
<span class="t" id="L95" style="left:7.00px;top:575.00px;font-size:11px;line-height:12px;color:#000;">25</span>
<span class="t" id="L96" style="left:7.00px;top:590.00px;font-size:11px;line-height:12px;color:#000;">26</span>
<span class="t" id="L97" style="left:7.00px;top:605.00px;font-size:11px;line-height:12px;color:#000;">27</span>
<span class="t" id="L98" style="left:7.00px;top:620.00px;font-size:11px;line-height:12px;color:#000;">28</span>
<span class="t" id="L99" style="left:27.00px;top:215.00px;font-size:11px;line-height:12px;color:#000;font-weight:bold;">Это группа</span>
<span class="t" id="L100" style="left:122.00px;top:215.00px;font-size:11px;line-height:12px;color:#000;font-weight:bold;">Код</span>
<span class="t" id="L101" style="left:217.00px;top:215.00px;font-size:11px;line-height:12px;color:#000;font-weight:bold;">Наименование</span>
<span class="t" id="L102" style="left:312.00px;top:215.00px;font-size:11px;line-height:12px;color:#000;font-weight:bold;">Родитель</span>
<span class="t" id="L103" style="left:407.00px;top:215.00px;font-size:11px;line-height:12px;color:#000;font-weight:bold;">Наименование</span>
<span class="t" id="L104" style="left:502.00px;top:215.00px;font-size:11px;line-height:12px;color:#000;font-weight:bold;">Кодификатор</span>
<span class="t" id="L105" style="left:597.00px;top:215.00px;font-size:11px;line-height:12px;color:#000;font-weight:bold;">Вид операции</span>
<span class="t" id="L106" style="left:692.00px;top:215.00px;font-size:11px;line-height:12px;color:#000;font-weight:bold;">Форма оплаты</span>
<span class="t" id="L107" style="left:787.00px;top:215.00px;font-size:11px;line-height:12px;color:#000;font-weight:bold;">Вид статьи</span>
<span class="t" id="L108" style="left:882.00px;top:215.00px;font-size:11px;line-height:12px;color:#000;font-weight:bold;">Тип статьи</span>
<span class="t" id="L109" style="left:977.00px;top:215.00px;font-size:11px;line-height:12px;color:#000;font-weight:bold;">Направление</span>
<span class="t" id="L110" style="left:1072.00px;top:215.00px;font-size:11px;line-height:12px;color:#000;font-weight:bold;">Нормируемая</span>
<span class="t" id="L111" style="left:1167.00px;top:215.00px;font-size:11px;line-height:12px;color:#000;font-weight:bold;">Признак</span>
<span class="t" id="L112" style="left:1262.00px;top:215.00px;font-size:11px;line-height:12px;color:#000;font-weight:bold;">Разрешить</span>
<span class="t" id="L113" style="left:1357.00px;top:215.00px;font-size:11px;line-height:12px;color:#000;font-weight:bold;">Учет по количеству</span>
<span class="t" id="L114" style="left:1475.00px;top:215.00px;font-size:11px;line-height:12px;color:#000;font-weight:bold;">Учет по сумме</span>
<span class="t" id="L115" style="left:27.00px;top:230.00px;font-size:11px;line-height:12px;color:#000;">Нет</span>
<span class="t" id="L116" style="left:217.00px;top:230.00px;font-size:11px;line-height:12px;color:#000;">Материальные</span>
<span class="t" id="L117" style="left:312.00px;top:230.00px;font-size:11px;line-height:12px;color:#000;">Расходы_нов</span>
<span class="t" id="L118" style="left:407.00px;top:230.00px;font-size:11px;line-height:12px;color:#000;">Материальные</span>
<span class="t" id="L119" style="left:502.00px;top:230.00px;font-size:11px;line-height:12px;color:#000;">7.0.0.1</span>
<span class="t" id="L120" style="left:882.00px;top:230.00px;font-size:11px;line-height:12px;color:#000;">БДДС</span>
<span class="t" id="L121" style="left:977.00px;top:230.00px;font-size:11px;line-height:12px;color:#000;">Расходование</span>
<span class="t" id="L122" style="left:1475.00px;top:230.00px;font-size:11px;line-height:12px;color:#000;">Да</span>
<span class="t" id="L123" style="left:27.00px;top:245.00px;font-size:11px;line-height:12px;color:#000;">Нет</span>
<span class="t" id="L124" style="left:217.00px;top:245.00px;font-size:11px;line-height:12px;color:#000;">Поступления</span>
<span class="t" id="L125" style="left:312.00px;top:245.00px;font-size:11px;line-height:12px;color:#000;">Доходы_нов</span>
<span class="t" id="L126" style="left:407.00px;top:245.00px;font-size:11px;line-height:12px;color:#000;">Поступления</span>
<span class="t" id="L127" style="left:502.00px;top:245.00px;font-size:11px;line-height:12px;color:#000;">7.0.0.2</span>
<span class="t" id="L128" style="left:882.00px;top:245.00px;font-size:11px;line-height:12px;color:#000;">БДДС</span>
<span class="t" id="L129" style="left:977.00px;top:245.00px;font-size:11px;line-height:12px;color:#000;">Поступление</span>
<span class="t" id="L130" style="left:1475.00px;top:245.00px;font-size:11px;line-height:12px;color:#000;">Да</span>
<span class="t" id="L131" style="left:8.00px;top:663.00px;font-size:12px;line-height:14px;color:#444;">Готово</span>
<span class="t" id="L132" style="left:1562.00px;top:663.00px;font-size:12px;line-height:14px;color:#444;letter-spacing:-0.667px;">100%</span>
</body></html>
